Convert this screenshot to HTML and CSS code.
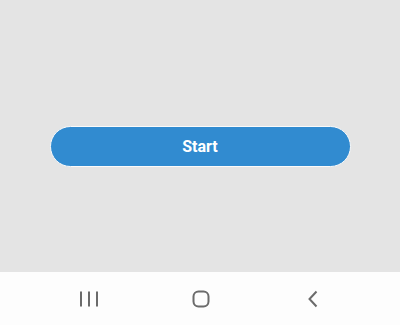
FILE: index.html
```html
<!DOCTYPE html>
<html lang="en">

<head>
    <meta charset="UTF-8" />
    <meta name="viewport" content="width=device-width, initial-scale=1.0" />
    <title>Start</title>
    <link rel="stylesheet" href="styles.css">
</head>

<body>
    <div class="screen">
        <button type="button" class="start-btn">Start</button>
    </div>

    <!-- System navigation bar -->
    <nav class="nav-bar">
        <div class="nav-item">
            <svg width="20" height="16" viewBox="0 0 20 16">
                <rect x="1" y="0.5" width="2" height="15" fill="#6b6b6b" />
                <rect x="9" y="0.5" width="2" height="15" fill="#6b6b6b" />
                <rect x="17" y="0.5" width="2" height="15" fill="#6b6b6b" />
            </svg>
        </div>
        <div class="nav-item">
            <svg width="18" height="18" viewBox="0 0 18 18">
                <rect x="1.5" y="1.5" width="15" height="15" rx="5" fill="none" stroke="#6b6b6b" stroke-width="2" />
            </svg>
        </div>
        <div class="nav-item">
            <svg width="12" height="18" viewBox="0 0 12 18">
                <polyline points="9.5,1.5 2.5,9 9.5,16.5" fill="none" stroke="#6b6b6b" stroke-width="2" />
            </svg>
        </div>
    </nav>
</body>

</html>
```

FILE: styles.css
```css
body {
    margin: 0;
    font-family: Roboto, "Liberation Sans", Arial, sans-serif;
    background-color: #e4e4e4;
    height: 325px;
    overflow: hidden;
}

.screen {
    height: 272px;
    display: flex;
    flex-direction: column;
    align-items: center;
}

.start-btn {
    margin-top: 126px;
    width: 301px;
    height: 41px;
    border: 1px solid #fafafa;
    border-radius: 21px;
    background-color: #318bd0;
    color: white;
    font-family: Roboto, "Liberation Sans", Arial, sans-serif;
    font-size: 16px;
    font-weight: bold;
    cursor: pointer;
}

.nav-bar {
    height: 53px;
    background-color: #fdfdfd;
    display: grid;
    grid-template-columns: repeat(3, 112px);
    justify-content: center;
    align-items: center;
    padding-left: 2px;
}

.nav-item {
    display: flex;
    justify-content: center;
    align-items: center;
}
```
